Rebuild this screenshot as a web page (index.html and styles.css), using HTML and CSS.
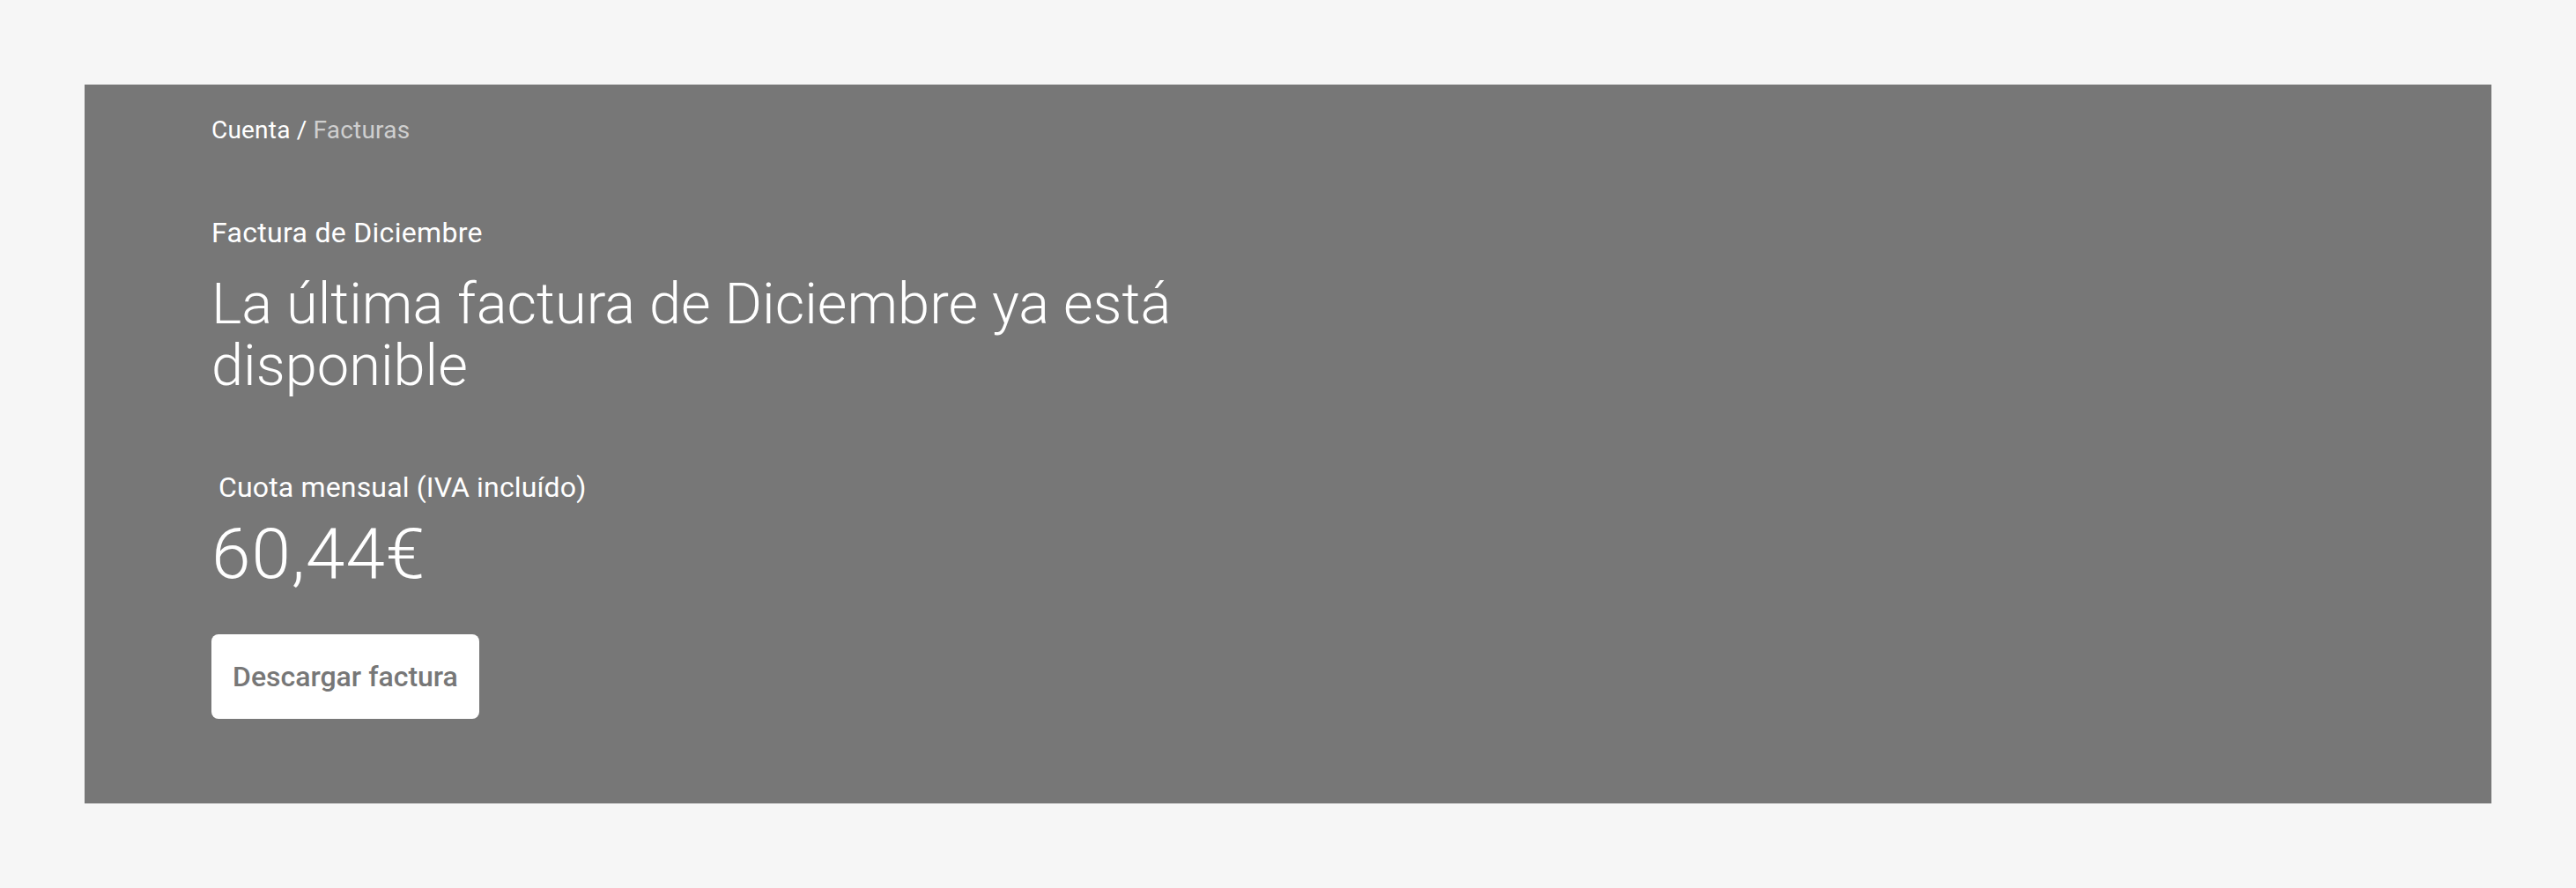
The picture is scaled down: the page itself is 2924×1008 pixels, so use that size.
FILE: index.html
```html
<!DOCTYPE html>
<html lang="es">
<head>
<meta charset="utf-8">
<title>Factura de Diciembre</title>
<link rel="stylesheet" href="styles.css">
</head>
<body>
<main class="page">
  <section class="hero">
    <nav class="breadcrumb"><a class="crumb" href="#">Cuenta</a> / <span class="crumb-current">Facturas</span></nav>
    <div class="hero-body">
      <p class="eyebrow">Factura de Diciembre</p>
      <h1 class="title">La última factura de Diciembre ya está disponible</h1>
      <p class="label">&nbsp;Cuota mensual (IVA incluído)</p>
      <p class="amount">60,44€</p>
      <button class="btn" type="button">Descargar factura</button>
    </div>
  </section>
</main>
</body>
</html>
```
FILE: styles.css
```css
* { box-sizing: border-box; }
html, body { margin: 0; padding: 0; }
body {
  background: #f6f6f6;
  font-family: Roboto, "Liberation Sans", sans-serif;
  color: #ffffff;
}
.page {
  padding: 96px 96px;
}
.hero {
  background: #777777;
  padding: 36px 144px 96px;
  display: flex;
  flex-direction: column;
}
.breadcrumb {
  font-size: 28px;
  line-height: 32px;
  letter-spacing: 0.2px;
  color: #ffffff;
}
.crumb { color: #ffffff; text-decoration: none; }
.crumb-current { color: #cfcfcf; }
.hero-body {
  margin-top: 81px;
  display: flex;
  flex-direction: column;
  align-items: flex-start;
  max-width: 1222px;
}
.eyebrow {
  margin: 0;
  font-size: 32px;
  line-height: 38px;
  letter-spacing: 0.3px;
  font-weight: 400;
}
.title {
  margin: 27px 0 0;
  font-size: 65px;
  line-height: 70px;
  font-weight: 300;
}
.label {
  margin: 84px 0 0;
  font-size: 32px;
  line-height: 38px;
  letter-spacing: 0.15px;
  font-weight: 400;
}
.amount {
  margin: 13px 0 0;
  font-size: 80px;
  line-height: 88px;
  letter-spacing: 1px;
  font-weight: 300;
}
.btn {
  margin-top: 47px;
  height: 96px;
  padding: 0 24px;
  border: 0;
  border-radius: 8px;
  background: #ffffff;
  color: #777777;
  font-family: Roboto, "Liberation Sans", sans-serif;
  font-size: 32px;
  line-height: 38px;
  font-weight: 500;
  display: flex;
  align-items: center;
}
```
